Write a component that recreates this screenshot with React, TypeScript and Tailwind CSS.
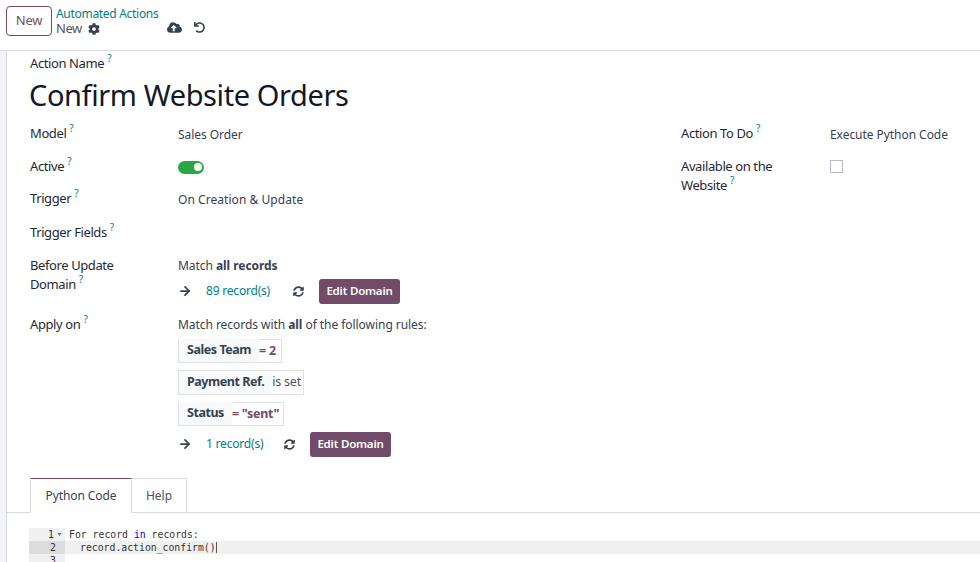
import { ArrowRight } from "lucide-react";
import { FaCloudUploadAlt, FaCog, FaSyncAlt, FaUndo } from "react-icons/fa";
import type { ReactNode } from "react";

const Hint = () => <sup className="relative top-[-6px] ml-[3px] align-baseline text-[10px] leading-none font-normal tracking-normal text-[#017e84]">?</sup>;

const Label = ({ children, up }: { children: ReactNode; up?: boolean }) => (
  <div className={`w-[148px] shrink-0 pr-[40px] text-[13px] leading-[19px] tracking-[-0.4px] text-[#1f2937] ${up ? "-mt-px" : ""}`}>
    {children}
    <Hint />
  </div>
);

const Chip = ({ name, op, strong, w }: { name: string; op: string; strong?: boolean; w: string }) => (
  <div className={`flex items-center border border-[#dee2e6] bg-white text-[12.5px] whitespace-nowrap ${w}`}>
    <span className="relative -mt-px flex h-[23px] items-center bg-[#f8f9fa] pr-[8px] pl-[8px] font-bold tracking-[-0.45px] text-[#374151]">{name}</span>
    <span className={strong ? "font-bold tracking-[-0.3px] text-[#714b67]" : "tracking-[-0.2px] text-[#4b5563]"}>{op}</span>
  </div>
);

const RecordsRow = ({ count, gap }: { count: string; gap: string }) => (
  <div className="flex h-[26px] items-center">
    <ArrowRight className="h-[14px] w-[14px] text-[#374151]" strokeWidth={3} />
    <span className={`ml-[14px] text-[12px] tracking-[-0.2px] text-[#017e84] ${gap}`}>{count}</span>
    <FaSyncAlt className="h-[11px] w-[11px] text-[#374151]" />
    <button className="ml-[15px] h-[25px] w-[81px] rounded-[3px] bg-[#714b67] text-[11.5px] font-semibold tracking-[-0.2px] whitespace-nowrap text-white">Edit Domain</button>
  </div>
);

export default function App() {
  return (
    <div className="h-[562px] w-[980px] overflow-hidden bg-white font-['Noto_Sans','Open_Sans',sans-serif] text-[13px] text-[#374151]">
      <header className="flex h-[51px] items-start border-b border-[#d8dadd] pt-[6px] pl-[6px]">
        <button className="h-[30px] w-[46px] rounded-[4px] border border-[#714b67] text-[13px] tracking-[-0.2px] text-[#714b67]">New</button>
        <div className="ml-[4px] leading-[15px]">
          <div className="text-[12px] tracking-[-0.3px] text-[#017e84]">Automated Actions</div>
          <div className="flex items-center text-[13px] tracking-[-0.5px] text-[#4b5563]">
            New
            <FaCog className="ml-[6px] h-[12px] w-[12px] text-[#374151]" />
            <FaCloudUploadAlt className="relative -top-[1px] ml-[67px] h-[15px] w-[15px] text-[#374151]" />
            <FaUndo className="relative -top-[1px] ml-[12px] h-[11px] w-[11px] text-[#374151]" />
          </div>
        </div>
      </header>

      <div className="flex h-[511px]">
        <div className="w-[7px] shrink-0 border-r border-[#d8dadd] bg-[#f3f4f8]" />
        <main className="min-w-0 flex-1">
          <div className="pl-[23px]">
            <div className="pt-[3px] text-[13px] leading-[18px] tracking-[-0.4px] text-[#1f2937]">Action Name<Hint /></div>
            <h1 className="mt-[3px] -ml-px text-[29px] leading-[40px] font-normal tracking-[-0.4px] whitespace-nowrap text-[#111827]">Confirm Website Orders</h1>

            <div className="mt-[10px] flex">
              <div className="w-[651px] shrink-0">
                <div className="flex h-[32px]">
                  <Label up>Model</Label>
                  <div className="text-[12px] leading-[20px] tracking-[-0.05px]">Sales Order</div>
                </div>
                <div className="flex h-[33px]">
                  <Label>Active</Label>
                  <div className="flex h-[20px] items-center">
                    <div className="flex h-[13px] w-[26px] items-center justify-end rounded-full bg-[#28a745] pr-[2px]">
                      <div className="h-[8px] w-[8px] rounded-full bg-white" />
                    </div>
                  </div>
                </div>
                <div className="flex h-[33px]">
                  <Label up>Trigger</Label>
                  <div className="text-[12px] leading-[20px] tracking-[0.05px]">On Creation &amp; Update</div>
                </div>
                <div className="flex h-[33px]">
                  <Label>Trigger Fields</Label>
                </div>
                <div className="flex h-[59px]">
                  <Label>Before Update Domain</Label>
                  <div>
                    <div className="text-[12px] leading-[20px] tracking-[-0.05px]">Match <b className="font-bold">all records</b></div>
                    <div className="mt-[2px]"><RecordsRow count="89 record(s)" gap="w-[87px]" /></div>
                  </div>
                </div>
                <div className="flex">
                  <Label>Apply on</Label>
                  <div>
                    <div className="text-[12px] leading-[20px] tracking-[-0.05px]">Match records with <b className="font-bold">all</b> of the following rules:</div>
                    <div className="mt-[4px] flex flex-col items-start gap-[7px]">
                      <Chip name="Sales Team" op="= 2" strong w="h-[24px] w-[104px]" />
                      <Chip name="Payment Ref." op="is set" w="h-[25px] w-[126px]" />
                      <Chip name="Status" op='= "sent"' strong w="h-[24px] w-[106px]" />
                    </div>
                    <div className="mt-[5px]"><RecordsRow count="1 record(s)" gap="w-[78px]" /></div>
                  </div>
                </div>
              </div>
              <div className="flex-1">
                <div className="flex h-[32px]">
                  <div className="-mt-px w-[149px] shrink-0 text-[13px] leading-[19px] tracking-[-0.4px] text-[#1f2937]">Action To Do<Hint /></div>
                  <div className="text-[12px] leading-[20px] tracking-[-0.05px] whitespace-nowrap">Execute Python Code</div>
                </div>
                <div className="flex">
                  <div className="w-[149px] shrink-0 pr-[40px] text-[13px] leading-[19px] tracking-[-0.4px] text-[#1f2937]">Available on the Website<Hint /></div>
                  <div className="mt-[3px] h-[13px] w-[13px] border border-[#b8bcc2] bg-white" />
                </div>
              </div>
            </div>
          </div>

          <div className="mt-[21px] flex h-[35px] items-end border-b border-[#d8dadd] pl-[23px]">
            <div className="-mb-px flex h-[35px] w-[102px] items-center justify-center border border-b-0 border-[#d8dadd] border-t-[#714b67] bg-white text-[12px] tracking-[-0.1px] text-[#374151]">Python Code</div>
            <div className="-mb-px flex h-[35px] w-[55px] items-center justify-center border border-b-0 border-l-0 border-[#d8dadd] text-[12px] text-[#4b5563]">Help</div>
          </div>

          <div className="mt-[15px] ml-[22px] font-['DejaVu_Sans_Mono','Liberation_Mono',monospace] text-[9.8px] leading-[13px]">
            <div className="flex h-[13px]">
              <div className="flex h-[13px] w-[36px] items-center justify-end bg-[#f0f0f0] pr-[3px] text-[#333]">
                1
                <svg viewBox="0 0 6 4" className="ml-[3px] h-[3px] w-[5px] fill-[#777]"><path d="M0 0h6L3 4z" /></svg>
              </div>
              <div className="pl-[4px] text-[#333]">For record <span className="text-[#0000ff]">in</span> records:</div>
            </div>
            <div className="flex h-[13px] bg-[#f0f0f0]">
              <div className="h-[13px] w-[36px] bg-[#dcdcdc] pr-[9px] text-right text-[#333]">2</div>
              <div className="pl-[15px] text-[#333]">record.action_confirm()<span className="border-l border-[#555]" /></div>
            </div>
            <div className="flex h-[13px]">
              <div className="h-[13px] w-[36px] bg-[#f0f0f0] pr-[9px] text-right text-[#333]">3</div>
            </div>
          </div>
        </main>
      </div>
    </div>
  );
}
